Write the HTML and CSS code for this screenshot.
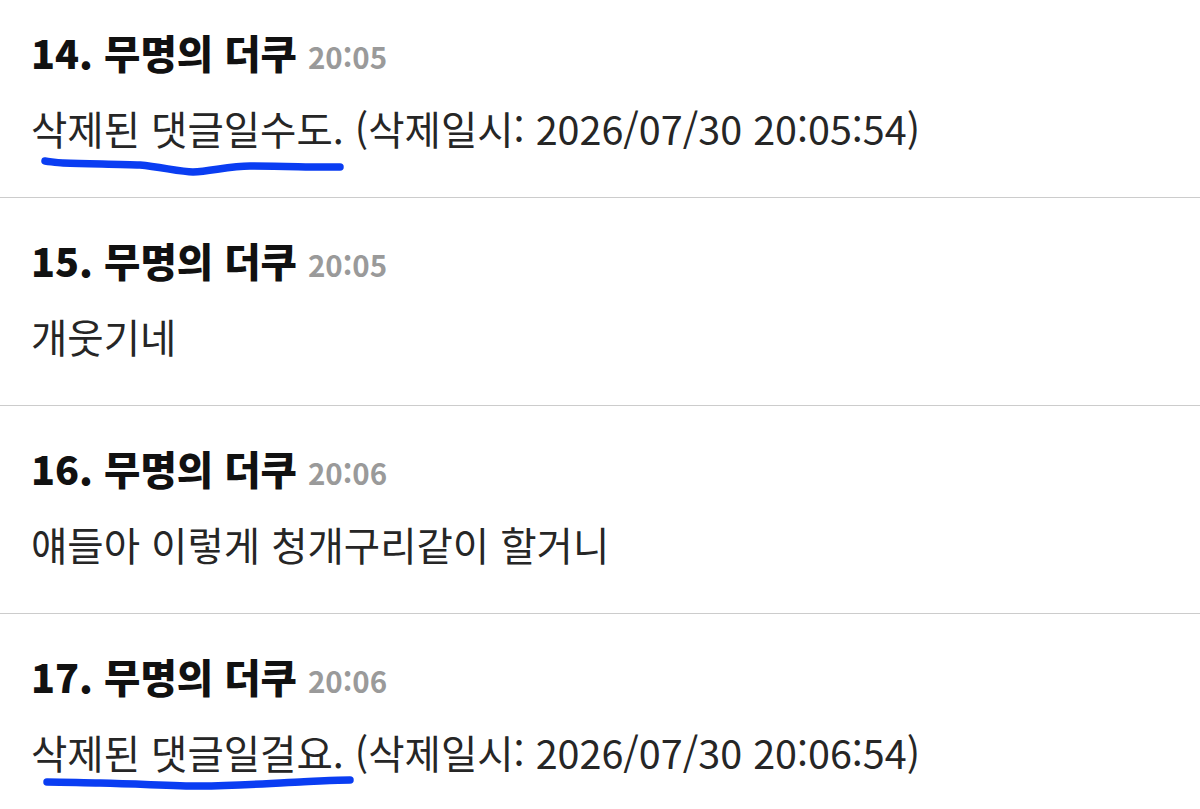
FILE: index.html
```html
<!doctype html>
<html lang="ko">
<head>
    <meta charset="utf-8">
    <meta name="viewport" content="width=device-width, initial-scale=1.0">
    <title>댓글</title>
    <link rel="stylesheet" href="styles.css">
</head>
<body>
    <ul class="comments">
        <li class="comment">
            <div class="comment-head">
                <span class="comment-author">14. 무명의 더쿠</span>
                <span class="comment-time">20:05</span>
            </div>
            <p class="comment-body">
                삭제된 댓글일수도. (삭제일시: 2026/07/30 20:05:54)
                <svg class="scribble scribble-a" viewBox="0 0 310 24" width="310" height="24"><path d="M4 7 C 12 8, 16 9, 22 9 C 50 10, 80 10, 99 11 C 120 13, 140 18, 152 18 C 170 17, 190 12, 209 12 C 240 12, 265 13, 279 13 L 299 13" /></svg>
            </p>
        </li>
        <li class="comment">
            <div class="comment-head">
                <span class="comment-author">15. 무명의 더쿠</span>
                <span class="comment-time">20:05</span>
            </div>
            <p class="comment-body">개웃기네</p>
        </li>
        <li class="comment">
            <div class="comment-head">
                <span class="comment-author">16. 무명의 더쿠</span>
                <span class="comment-time">20:06</span>
            </div>
            <p class="comment-body">얘들아 이렇게 청개구리같이 할거니</p>
        </li>
        <li class="comment">
            <div class="comment-head">
                <span class="comment-author">17. 무명의 더쿠</span>
                <span class="comment-time">20:06</span>
            </div>
            <p class="comment-body">
                삭제된 댓글일걸요. (삭제일시: 2026/07/30 20:06:54)
                <svg class="scribble scribble-b" viewBox="0 0 320 20" width="320" height="20"><path d="M4 9 C 25 9, 40 10, 57 10 C 100 11, 130 13, 157 13 C 195 13, 230 10, 257 9 C 280 8, 295 7, 307 7" /></svg>
            </p>
        </li>
    </ul>
</body>
</html>
```

FILE: styles.css
```css
/* Base */
body {
    margin: 0;
    padding: 0;
    background: #ffffff;
    font-family: 'Noto Sans CJK KR', 'Noto Sans', sans-serif;
    color: #222222;
    overflow: hidden;
}

/* Comment list */
.comments {
    list-style: none;
    margin: -10px 0 0 0;
    padding: 0;
}

.comment {
    box-sizing: border-box;
    height: 208px;
    padding: 36px 30px 0 31px;
    border-bottom: 1px solid #cccccc;
}

.comment-head {
    display: flex;
    align-items: baseline;
    gap: 11px;
    height: 52px;
    line-height: 52px;
}

.comment-author {
    font-size: 39.5px;
    font-weight: 900;
    color: #111111;
}

.comment-time {
    font-size: 29.5px;
    font-weight: 700;
    color: #9a9a9a;
}

.comment-body {
    position: relative;
    margin: 24px 0 0 0;
    font-size: 39.5px;
    line-height: 52px;
    color: #262626;
}

/* Hand-drawn blue underline over the deleted notice */
.scribble {
    position: absolute;
    overflow: visible;
}

.scribble-a {
    left: 10px;
    top: 52px;
}

.scribble-b {
    left: 12px;
    top: 47px;
}

.scribble path {
    fill: none;
    stroke: #0a3df2;
    stroke-width: 7.5;
    stroke-linecap: round;
    stroke-linejoin: round;
}
```
